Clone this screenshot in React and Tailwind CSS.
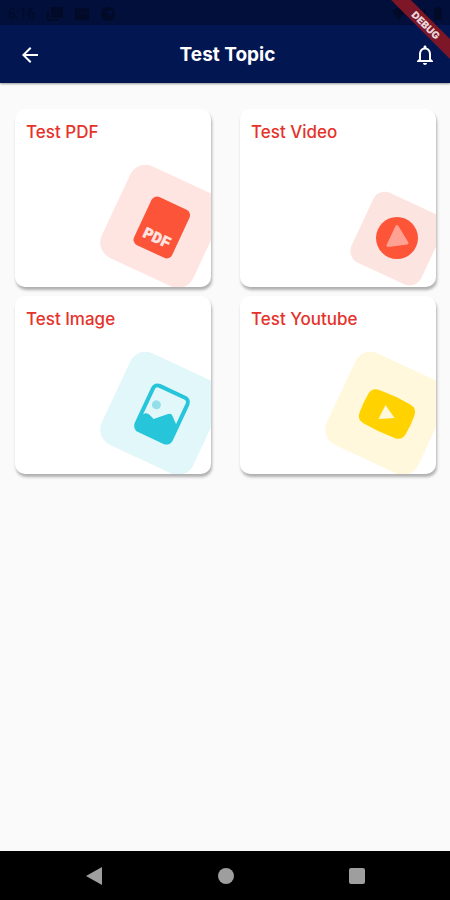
import React from "react";

const topics = [
  { title: "Test PDF", Art: PdfArt },
  { title: "Test Video", Art: VideoArt },
  { title: "Test Image", Art: ImageArt },
  { title: "Test Youtube", Art: YoutubeArt },
];

function PdfArt() {
  return (
    <g transform="translate(71 70) rotate(25)">
      <rect x="-51" y="-51" width="101" height="101" rx="17" fill="#ffe5e2" />
      <rect x="-21" y="-26" width="42" height="53" rx="6" fill="#fb5438" />
      <text
        x="0"
        y="17"
        textAnchor="middle"
        fill="#ffe5e2"
        className="font-['Liberation_Mono'] text-[16px] font-bold"
        stroke="#ffe5e2"
        strokeWidth="0.6"
      >
        PDF
      </text>
    </g>
  );
}

function VideoArt() {
  return (
    <>
      <g transform="translate(81 81) rotate(25)">
        <rect x="-38" y="-38" width="77" height="77" rx="13" fill="#fce5e1" />
      </g>
      <circle cx="81" cy="81" r="21" fill="#fe5437" />
      <path d="M81 69.500 L72 88.500 L91 86 Z" fill="#ffa193" stroke="#ffa193" strokeWidth="3" strokeLinejoin="round" />
    </>
  );
}

function ImageArt() {
  return (
    <g transform="translate(71 70) rotate(25)">
      <rect x="-51" y="-51" width="101" height="101" rx="17" fill="#e2f7f9" />
      <rect x="-19" y="-24.500" width="38" height="49" rx="5" fill="none" stroke="#26c5da" strokeWidth="4" />
      <path
        d="M-19 10.500 L-15.500 6.500 Q-13.500 5 -11 6 L-5.500 8 L5.500 -2.500 Q8 -5 10.500 -2.500 L19 5 V20 Q19 25 14 25 H-14 Q-19 25 -19 20 Z"
        fill="#26c5da"
      />
      <circle cx="-9" cy="-6" r="4.500" fill="#93dfe9" />
    </g>
  );
}

function YoutubeArt() {
  return (
    <>
      <g transform="translate(71 70) rotate(25)">
        <rect x="-51" y="-51" width="101" height="101" rx="17" fill="#fff8dc" />
        <path
          d="M-17 -18.500 Q0 -20 17 -18.500 Q25 -18 25.500 -10 Q26.500 0 25.500 10 Q25 18 17 18.500 Q0 20 -17 18.500 Q-25 18 -25.500 10 Q-26.500 0 -25.500 -10 Q-25 -18 -17 -18.500 Z"
          fill="#ffd200"
        />
      </g>
      <path d="M69.500 61 L62.500 75 L78.500 74 Z" fill="#fff8dc" />
    </>
  );
}

function TopicCard({ title, Art }) {
  return (
    <a
      href="#"
      className="relative block h-[178px] overflow-hidden rounded-[10px] bg-white px-[11px] pt-[11px] shadow-[1px_3px_3px_rgba(0,0,0,0.3)]"
    >
      <h2 className="text-[17px] leading-6 font-medium text-[#e5322b]">{title}</h2>
      <svg viewBox="0 0 120 130" className="absolute right-0 bottom-0 h-[130px] w-[120px]" aria-hidden="true">
        <Art />
      </svg>
    </a>
  );
}

function StatusBar() {
  return (
    <div className="flex h-[25px] items-center justify-between bg-[#020f3b] px-2 pt-[2px] text-[#010a26]">
      <div className="flex items-center gap-3">
        <span className="font-[Roboto] text-sm">6:16</span>
        <svg viewBox="0 0 16 14" className="h-[14px] w-4" fill="none" stroke="currentColor" strokeWidth="2">
          <path d="M5 1h10v9H5z" fill="currentColor" />
          <path d="M1 4v9h11" />
          <path d="M6 8l3-3 4 3" stroke="#020f3b" strokeWidth="1" />
        </svg>
        <svg viewBox="0 0 14 12" className="h-3 w-[14px]">
          <path d="M0 0h14v12H0z" fill="currentColor" />
          <path d="M2 3l5 3 5-3" fill="none" stroke="#020f3b" />
        </svg>
        <svg viewBox="0 0 14 14" className="h-[14px] w-[14px]" fill="currentColor">
          <circle cx="7" cy="7" r="7" />
          <path d="M5 4h6v3l-3 3V6H5z" fill="#020f3b" />
        </svg>
      </div>
      <div className="flex items-center gap-2">
        <svg viewBox="0 0 14 12" className="h-3 w-[14px]" fill="currentColor">
          <path d="M0 3Q7-3 14 3L7 12z" />
        </svg>
        <svg viewBox="0 0 12 12" className="h-3 w-3" fill="currentColor">
          <path d="M12 0v12H0z" />
        </svg>
        <svg viewBox="0 0 8 13" className="h-[13px] w-2" fill="currentColor">
          <path d="M2 0h4v1h2v12H0V1h2z" />
        </svg>
      </div>
    </div>
  );
}

function AppBar() {
  return (
    <header className="flex h-[58px] items-center justify-between bg-[#021752] pt-[2px] pr-[13px] pl-[18px] text-white shadow-[0_1px_2px_rgba(0,0,0,0.4)]">
      <button aria-label="Back" className="h-6 w-6">
        <svg viewBox="0 0 24 24" className="h-6 w-6" fill="currentColor">
          <path d="M20 11H7.830l5.590-5.590L12 4l-8 8 8 8 1.410-1.410L7.830 13H20v-2z" />
        </svg>
      </button>
      <h1 className="text-[19px] leading-7 font-bold">Test Topic</h1>
      <button aria-label="Notifications" className="h-6 w-6">
        <svg viewBox="0 0 24 24" className="h-6 w-6" fill="currentColor">
          <path d="M12 22c1.100 0 2-.9 2-2h-4c0 1.100.9 2 2 2zm6-6v-5c0-3.070-1.630-5.640-4.500-6.320V4c0-.83-.67-1.500-1.500-1.500s-1.500.67-1.500 1.500v.68C7.640 5.360 6 7.920 6 11v5l-2 2v1h16v-1l-2-2zm-2 1H8v-6c0-2.480 1.510-4.500 4-4.500s4 2.020 4 4.500v6z" />
        </svg>
      </button>
    </header>
  );
}

function NavigationBar() {
  return (
    <nav className="flex h-[49px] items-center justify-around bg-black px-7 text-[#9e9e9e]">
      <button aria-label="Back">
        <svg viewBox="0 0 18 18" className="h-[18px] w-[18px]" fill="currentColor">
          <path d="M17 0v18L1 9z" />
        </svg>
      </button>
      <button aria-label="Home" className="h-4 w-4 rounded-full bg-[#9e9e9e]" />
      <button aria-label="Recent apps" className="h-4 w-4 rounded-[2px] bg-[#9e9e9e]" />
    </nav>
  );
}

export default function App() {
  return (
    <div className="relative flex min-h-screen flex-col overflow-hidden bg-[#fafafa] font-[Inter,sans-serif]">
      <StatusBar />
      <AppBar />
      <main className="grid flex-1 grid-cols-2 content-start gap-x-[29px] gap-y-[9px] pt-[26px] pr-[14px] pl-[15px]">
        {topics.map((topic) => (
          <TopicCard key={topic.title} {...topic} />
        ))}
      </main>
      <NavigationBar />

      {/* Debug ribbon */}
      <div className="absolute top-[18px] -right-[26px] flex h-[14px] w-[100px] rotate-45 items-center justify-center bg-[#7d1626] text-[10px] leading-none font-black text-[#e8d5dc]">
        DEBUG
      </div>
    </div>
  );
}
